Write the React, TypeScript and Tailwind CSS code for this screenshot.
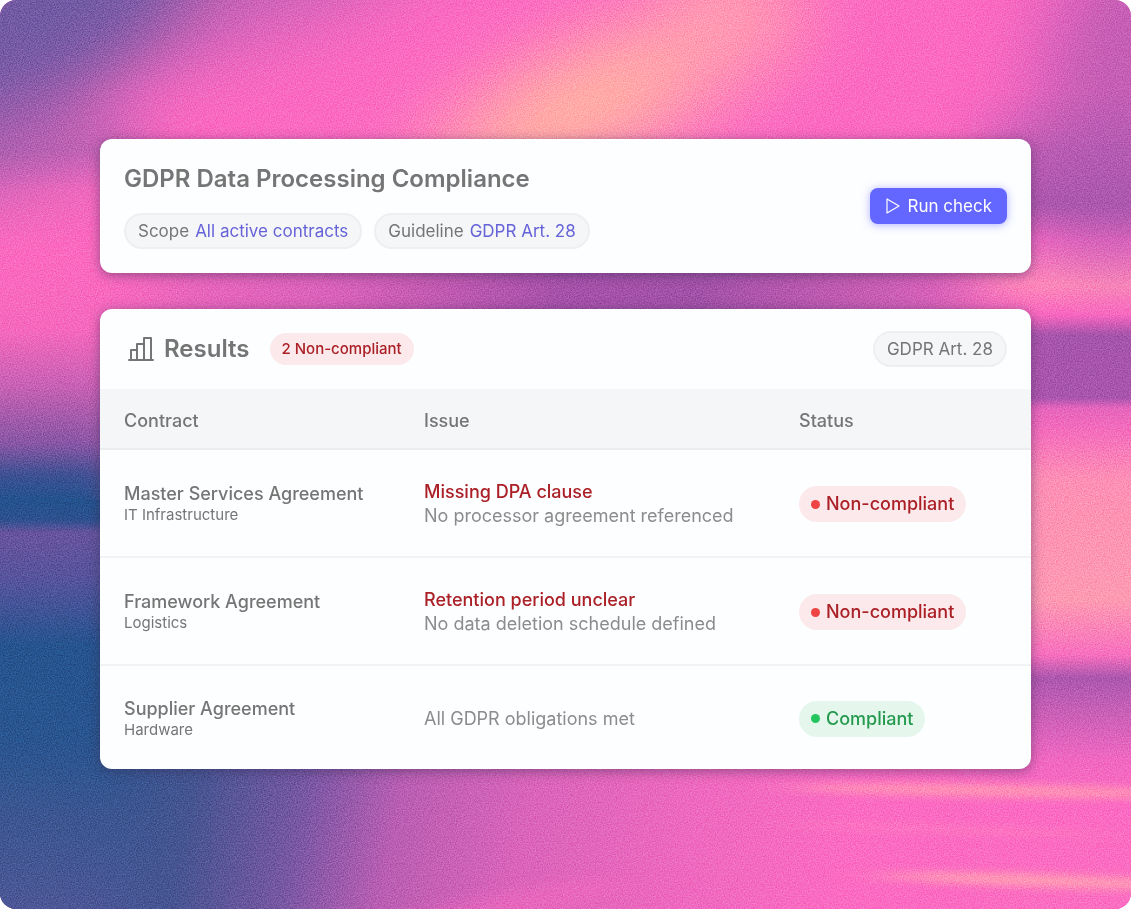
import type { ReactNode } from 'react';

type Status = 'Compliant' | 'Non-compliant';

type Result = {
  contract: string;
  category: string;
  issue?: string;
  note: string;
  status: Status;
};

const RESULTS: Result[] = [
  {
    contract: 'Master Services Agreement',
    category: 'IT Infrastructure',
    issue: 'Missing DPA clause',
    note: 'No processor agreement referenced',
    status: 'Non-compliant',
  },
  {
    contract: 'Framework Agreement',
    category: 'Logistics',
    issue: 'Retention period unclear',
    note: 'No data deletion schedule defined',
    status: 'Non-compliant',
  },
  {
    contract: 'Supplier Agreement',
    category: 'Hardware',
    note: 'All GDPR obligations met',
    status: 'Compliant',
  },
];

// y position on the 909 high canvas, colour
type Stop = [number, string];

const LEFT_STOPS: Stop[] = [
  [90, '#c862b500'],
  [150, '#c862b5'],
  [190, '#f468be'],
  [250, '#fc68bf'],
  [330, '#f566bc'],
  [385, '#c75fb2'],
  [445, '#8254a2'],
  [475, '#3c4f90'],
  [500, '#22508a'],
  [520, '#2c4f8b'],
  [533, '#66529c'],
  [580, '#54529a'],
  [645, '#25528b'],
  [740, '#28538c'],
  [820, '#3b548f'],
  [909, '#4a5594'],
];

const RIGHT_STOPS: Stop[] = [
  [90, '#cf60b800'],
  [150, '#c25db4'],
  [205, '#a855ab'],
  [240, '#ee66bf'],
  [285, '#ff88b8'],
  [315, '#f966bf'],
  [335, '#a453aa'],
  [398, '#a653ab'],
  [408, '#e563bb'],
  [430, '#f46abb'],
  [480, '#fd8db3'],
  [600, '#fd98b0'],
  [655, '#f76dbd'],
  [678, '#a955ac'],
  [700, '#bd5bb3'],
  [760, '#f066bf'],
  [800, '#fb68c2'],
  [909, '#fb6cc0'],
];

// x position on the 1131 wide canvas, colour
const GAP_STOPS: Stop[] = [
  [0, '#f968be'],
  [110, '#f166bd'],
  [330, '#d960b8'],
  [560, '#a450a8'],
  [700, '#a050a6'],
  [900, '#cc5db4'],
  [1060, '#f868bf'],
];

const BOTTOM_STOPS: Stop[] = [
  [0, '#33548e'],
  [190, '#44538f'],
  [300, '#7355a0'],
  [400, '#b75cb1'],
  [530, '#d962b8'],
  [700, '#ee67be'],
  [860, '#fb69c2'],
  [1131, '#fb69c2'],
];

// cx, cy, rx, ry, rotation, fill, opacity
type Blob = [number, number, number, number, number, string, number];

const TOP_BLOBS: Blob[] = [
  [90, -10, 380, 90, -14, '#b45eb0', 0.8],
  [0, 10, 230, 120, -28, '#7059a1', 1],
  [0, 150, 90, 40, -20, '#b15eb0', 0.7],
  [610, 90, 230, 66, -25, '#ff94b0', 1],
  [580, 110, 110, 36, -22, '#ffb89c', 1],
  [715, 0, 40, 70, 20, '#ffa0ae', 0.9],
  [1130, 90, 90, 170, 8, '#a957ae', 0.7],
];

const STREAKS: Blob[] = [
  [1010, 791, 220, 6, 1, '#ff93b2', 1],
  [960, 830, 180, 3, 2, '#ff84ba', 0.6],
  [1050, 881, 170, 6, 2, '#ff9cb2', 1],
  [520, 905, 120, 14, -12, '#f067be', 0.6],
];

function Blobs({ items }: { items: Blob[] }) {
  return (
    <>
      {items.map(([cx, cy, rx, ry, angle, fill, opacity]) => (
        <ellipse
          key={`${cx}-${cy}`}
          cx={cx}
          cy={cy}
          rx={rx}
          ry={ry}
          fill={fill}
          opacity={opacity}
          transform={`rotate(${angle} ${cx} ${cy})`}
        />
      ))}
    </>
  );
}

function Gradient({ id, stops, vertical }: { id: string; stops: Stop[]; vertical?: boolean }) {
  const size = vertical ? 909 : 1131;
  return (
    <linearGradient
      id={id}
      gradientUnits="userSpaceOnUse"
      x1="0"
      y1="0"
      x2={vertical ? 0 : size}
      y2={vertical ? size : 0}
    >
      {stops.map(([at, color]) => (
        <stop key={at} offset={at / size} stopColor={color} />
      ))}
    </linearGradient>
  );
}

function Backdrop() {
  return (
    <svg
      aria-hidden="true"
      viewBox="0 0 1131 909"
      preserveAspectRatio="none"
      className="absolute inset-0 h-full w-full"
    >
      <defs>
        <Gradient id="left" stops={LEFT_STOPS} vertical />
        <Gradient id="right" stops={RIGHT_STOPS} vertical />
        <Gradient id="gap" stops={GAP_STOPS} />
        <Gradient id="bottom" stops={BOTTOM_STOPS} />
        <filter id="soft" x="-100%" y="-100%" width="300%" height="300%">
          <feGaussianBlur stdDeviation="38" />
        </filter>
        <filter id="edge" x="-50%" y="-20%" width="200%" height="140%" colorInterpolationFilters="sRGB">
          <feGaussianBlur stdDeviation="30 1" />
        </filter>
        <filter id="streak" x="-20%" y="-100%" width="140%" height="300%">
          <feGaussianBlur stdDeviation="30 4" />
        </filter>
        <filter
          id="grain"
          x="0"
          y="0"
          width="100%"
          height="100%"
          colorInterpolationFilters="sRGB"
        >
          <feTurbulence type="fractalNoise" baseFrequency="0.85" numOctaves="2" />
          <feColorMatrix values="2 0 0 0 -0.45  2 0 0 0 -0.45  2 0 0 0 -0.45  0 0 0 0 1" />
        </filter>
      </defs>
      <rect width="1131" height="909" fill="#fb68c1" />
      <rect y="230" width="1131" height="300" fill="url(#gap)" />
      <rect
        x="-200"
        y="500"
        width="1500"
        height="409"
        fill="url(#bottom)"
        transform="skewX(-12) translate(170)"
      />
      <rect x="-160" y="90" width="300" height="860" fill="url(#left)" filter="url(#edge)" />
      <rect x="990" y="90" width="300" height="860" fill="url(#right)" filter="url(#edge)" />
      <g filter="url(#soft)">
        <Blobs items={TOP_BLOBS} />
      </g>
      <g filter="url(#streak)">
        <Blobs items={STREAKS} />
      </g>
      <rect
        width="1131"
        height="909"
        filter="url(#grain)"
        opacity="0.2"
        className="mix-blend-overlay"
      />
    </svg>
  );
}

function ChartIcon() {
  return (
    <svg
      aria-hidden="true"
      viewBox="0 0 32 32"
      fill="none"
      stroke="currentColor"
      strokeWidth="2"
      strokeLinecap="round"
      strokeLinejoin="round"
      className="size-8"
    >
      <path d="M5 27h24M7 27V17h6M13 27V11h7M20 27V5h7v22" />
    </svg>
  );
}

function PlayIcon() {
  return (
    <svg
      aria-hidden="true"
      viewBox="0 0 16 18"
      fill="none"
      stroke="currentColor"
      strokeWidth="1.2"
      strokeLinejoin="round"
      className="h-[18px] w-4"
    >
      <path d="M2 2v14L14 9z" />
    </svg>
  );
}

function Card({ children }: { children: ReactNode }) {
  return (
    <section className="relative overflow-hidden rounded-xl bg-[#fdfeff] shadow-[0_2px_12px_rgba(50,40,80,0.5)]">
      {children}
    </section>
  );
}

function Pill({ children }: { children: ReactNode }) {
  return (
    <span className="flex h-9 items-center gap-1.5 whitespace-nowrap rounded-full border-2 border-[#eeeff1] bg-[#f5f6f8] px-3 text-[17px] text-[#757575]">
      {children}
    </span>
  );
}

function StatusBadge({ status }: { status: Status }) {
  const ok = status === 'Compliant';
  return (
    <span
      className={`inline-flex h-9 items-center gap-1.5 whitespace-nowrap rounded-full px-3 align-middle font-medium ${
        ok ? 'bg-[#e5f7ed] text-[#259a4f]' : 'bg-[#fbe9eb] text-[#ab2027]'
      }`}
    >
      <span className={`size-[9px] rounded-full ${ok ? 'bg-[#22c55e]' : 'bg-[#ef4444]'}`} />
      {status}
    </span>
  );
}

export default function App() {
  return (
    <main className="relative isolate flex min-h-screen flex-col justify-center gap-9 overflow-hidden rounded-2xl px-[100px] pt-10 pb-[41px] font-[Inter,sans-serif] text-lg leading-6 text-[#757575]">
      <Backdrop />

      <Card>
        <div className="flex items-center justify-between p-6">
          <div>
            <h1 className="text-2xl leading-8 font-semibold">GDPR Data Processing Compliance</h1>
            <div className="mt-[18px] flex gap-3">
              <Pill>
                Scope <span className="text-[#6663d8]">All active contracts</span>
              </Pill>
              <Pill>
                Guideline <span className="text-[#6663d8]">GDPR Art. 28</span>
              </Pill>
            </div>
          </div>
          <button
            type="button"
            className="flex h-9 items-center gap-1.5 rounded-lg bg-[#6366ff] px-[15px] text-[17px] whitespace-nowrap text-white shadow-[0_1px_8px_rgba(99,102,255,0.5)]"
          >
            <PlayIcon />
            Run check
          </button>
        </div>
      </Card>

      <Card>
        <div className="flex items-center justify-between px-6 py-[22px]">
          <div className="flex items-center">
            <ChartIcon />
            <h2 className="ml-2 text-2xl leading-8 font-semibold">Results</h2>
            <span className="ml-5 flex h-8 items-center rounded-full bg-[#fbe9eb] px-3 text-[15px] font-medium whitespace-nowrap text-[#ab2027]">
              2 Non-compliant
            </span>
          </div>
          <Pill>GDPR Art. 28</Pill>
        </div>

        <table className="w-full table-fixed border-collapse text-left">
          <thead>
            <tr className="h-[60px] border-b-2 border-[#ecedef] bg-[#f5f6f8]">
              <th className="w-[300px] px-6 pt-1 font-medium">Contract</th>
              <th className="w-[375px] px-6 pt-1 font-medium">Issue</th>
              <th className="px-6 pt-1 font-medium">Status</th>
            </tr>
          </thead>
          <tbody>
            {RESULTS.map((row) => (
              <tr
                key={row.contract}
                className="h-[108px] border-b-2 border-[#f2f3f5] last:h-[104px] last:border-b-0"
              >
                <td className="px-6 pt-0.5">
                  <p className="font-medium leading-[22px]">{row.contract}</p>
                  <p className="text-[15px] leading-5">{row.category}</p>
                </td>
                <td className="px-6 pt-0.5">
                  {row.issue && <p className="font-medium text-[#ab2027]">{row.issue}</p>}
                  <p className="text-[#8c8c8c]">{row.note}</p>
                </td>
                <td className="px-6 pt-0.5">
                  <StatusBadge status={row.status} />
                </td>
              </tr>
            ))}
          </tbody>
        </table>
      </Card>
    </main>
  );
}
